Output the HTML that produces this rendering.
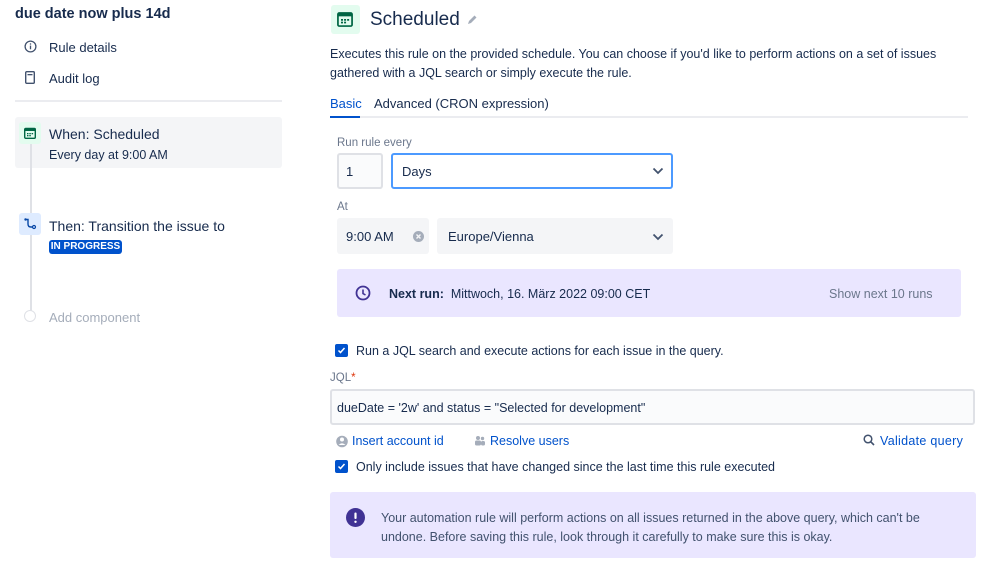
<!DOCTYPE html>
<html><head><meta charset="utf-8"><style>
*{margin:0;padding:0;box-sizing:border-box}
body{width:999px;height:569px;background:#fff;font-family:"Liberation Sans",sans-serif;color:#172b4d;position:relative;overflow:hidden;font-size:13px}
.a{position:absolute;white-space:nowrap}
.g{color:#6b778c}
.box{position:absolute;border-radius:3px}
.chk{position:absolute;width:13px;height:13px;background:#0052cc;border-radius:2px}
.lnk{color:#0052cc}
</style></head><body>
<div class="a" style="left:15px;top:6px;font-size:14.5px;font-weight:bold">due date now plus 14d</div>
<svg class="a" style="left:24px;top:40px" width="13" height="13" viewBox="0 0 14 14"><circle cx="7" cy="7" r="5.8" fill="none" stroke="#42526e" stroke-width="1.4"/><rect x="6.3" y="6" width="1.4" height="4" fill="#42526e"/><rect x="6.3" y="3.6" width="1.4" height="1.4" fill="#42526e"/></svg>
<div class="a" style="left:49px;top:40px;font-size:13px">Rule details</div>
<svg class="a" style="left:25px;top:71px" width="10" height="13" viewBox="0 0 10 13"><rect x="0.7" y="0.7" width="8.6" height="11.6" rx="1" fill="none" stroke="#42526e" stroke-width="1.4"/><rect x="2.5" y="3" width="5" height="1.3" fill="#42526e"/></svg>
<div class="a" style="left:49px;top:71px;font-size:13px">Audit log</div>
<div class="box" style="left:15px;top:100px;width:267px;height:2px;background:#ebecf0;border-radius:0"></div>
<div class="box" style="left:15px;top:117px;width:267px;height:51px;background:#f4f5f7"></div>
<div class="box" style="left:29.5px;top:144px;width:2px;height:168px;background:#dfe1e6;border-radius:0"></div>
<div class="box" style="left:19px;top:122px;width:22px;height:22px;background:#e3fcef"></div>
<svg class="a" style="left:24px;top:127px" width="12" height="12" viewBox="0 0 12 12"><rect x="0.7" y="1.5" width="10.6" height="9.8" rx="1" fill="none" stroke="#006644" stroke-width="1.4"/><rect x="0.7" y="1.5" width="10.6" height="2.5" fill="#006644"/><rect x="3" y="6" width="1.5" height="1.3" fill="#006644"/><rect x="5.3" y="6" width="1.5" height="1.3" fill="#006644"/><rect x="7.6" y="6" width="1.5" height="1.3" fill="#006644"/><rect x="3" y="8" width="1.5" height="1.3" fill="#006644"/><rect x="5.3" y="8" width="1.5" height="1.3" fill="#006644"/></svg>
<div class="a" style="left:49px;top:126px;font-size:14px">When: Scheduled</div>
<div class="a" style="left:49px;top:148px;font-size:12.5px">Every day at 9:00 AM</div>
<div class="box" style="left:19px;top:213px;width:22px;height:22px;background:#deebff"></div>
<svg class="a" style="left:23px;top:217px" width="14" height="14" viewBox="0 0 14 14"><path d="M2.5 2.5 L5 2.5 L5 7 Q5 10 8 10 L10 10" fill="none" stroke="#0747a6" stroke-width="1.4"/><circle cx="2.5" cy="2.5" r="1.2" fill="#0747a6"/><circle cx="11" cy="10" r="1.5" fill="none" stroke="#0747a6" stroke-width="1.2"/></svg>
<div class="a" style="left:49px;top:218px;font-size:14px">Then: Transition the issue to</div>
<div class="box" style="left:49px;top:240px;width:73px;height:14px;background:#0052cc;color:#fff;font-size:10px;font-weight:bold;line-height:14px;text-align:center">IN PROGRESS</div>
<div class="box" style="left:24px;top:310px;width:12px;height:12px;border:1.5px solid #dfe1e6;border-radius:50%;background:#fff"></div>
<div class="a" style="left:49px;top:310px;font-size:13px;color:#a5adba">Add component</div>

<div class="box" style="left:331px;top:5px;width:29px;height:29px;background:#e3fcef"></div>
<svg class="a" style="left:337px;top:11px" width="16" height="16" viewBox="0 0 12 12"><rect x="0.7" y="1.5" width="10.6" height="9.8" rx="1" fill="none" stroke="#006644" stroke-width="1.3"/><rect x="0.7" y="1.5" width="10.6" height="2.5" fill="#006644"/><rect x="3" y="6" width="1.5" height="1.3" fill="#006644"/><rect x="5.3" y="6" width="1.5" height="1.3" fill="#006644"/><rect x="7.6" y="6" width="1.5" height="1.3" fill="#006644"/><rect x="3" y="8" width="1.5" height="1.3" fill="#006644"/><rect x="5.3" y="8" width="1.5" height="1.3" fill="#006644"/></svg>
<div class="a" style="left:370px;top:9px;font-size:19px">Scheduled</div>
<svg class="a" style="left:466px;top:14px" width="12" height="12" viewBox="0 0 12 12"><path d="M2 10 L3 7 L8.5 1.5 L10.5 3.5 L5 9 Z" fill="#a5adba"/></svg>
<div class="a" style="left:330px;top:45px;font-size:12.5px;line-height:19px">Executes this rule on the provided schedule. You can choose if you'd like to perform actions on a set of issues<br>gathered with a JQL search or simply execute the rule.</div>
<div class="a" style="left:330px;top:96px;font-size:13px;color:#0052cc">Basic</div>
<div class="a" style="left:374px;top:96px;font-size:13px">Advanced (CRON expression)</div>
<div class="box" style="left:330px;top:116px;width:638px;height:2px;background:#ebecf0;border-radius:0"></div>
<div class="box" style="left:330px;top:116px;width:30px;height:2px;background:#0052cc;border-radius:0"></div>
<div class="a g" style="left:337px;top:137px;font-size:11.5px">Run rule every</div>
<div class="box" style="left:337px;top:153px;width:46px;height:36px;background:#fafbfc;border:2px solid #dfe1e6;padding:0 0 0 7px;line-height:34px">1</div>
<div class="box" style="left:391px;top:153px;width:282px;height:36px;background:#fff;border:2px solid #4c9aff;padding-left:9px;line-height:34px">Days</div>
<svg class="a" style="left:652px;top:167px" width="12" height="8" viewBox="0 0 12 8"><path d="M1.5 1.5 L6 6 L10.5 1.5" fill="none" stroke="#42526e" stroke-width="1.8"/></svg>
<div class="a g" style="left:337px;top:201px;font-size:11.5px">At</div>
<div class="box" style="left:337px;top:218px;width:92px;height:36px;background:#f4f5f7;padding-left:9px;line-height:37px">9:00 AM</div>
<svg class="a" style="left:413px;top:231px" width="11" height="11" viewBox="0 0 11 11"><circle cx="5.5" cy="5.5" r="5.5" fill="#a5adba"/><path d="M3.5 3.5 L7.5 7.5 M7.5 3.5 L3.5 7.5" stroke="#f4f5f7" stroke-width="1.4"/></svg>
<div class="box" style="left:437px;top:218px;width:236px;height:36px;background:#f4f5f7;padding-left:11px;line-height:37px">Europe/Vienna</div>
<svg class="a" style="left:652px;top:233px" width="12" height="8" viewBox="0 0 12 8"><path d="M1.5 1.5 L6 6 L10.5 1.5" fill="none" stroke="#42526e" stroke-width="1.8"/></svg>

<div class="box" style="left:337px;top:269px;width:624px;height:48px;background:#eae6ff"></div>
<svg class="a" style="left:355px;top:285px" width="16" height="16" viewBox="0 0 16 16"><circle cx="8" cy="8" r="6.5" fill="none" stroke="#403294" stroke-width="1.8"/><path d="M8 4.5 L8 8.5 L10.5 10" fill="none" stroke="#403294" stroke-width="1.6"/></svg>
<div class="a" style="left:389px;top:287px;font-size:12.5px"><b>Next run:</b>&nbsp; Mittwoch, 16. März 2022 09:00 CET</div>
<div class="a g" style="left:829px;top:287px;font-size:12.5px">Show next 10 runs</div>

<div class="chk" style="left:335px;top:344px"></div>
<svg class="a" style="left:337px;top:346px" width="9" height="9" viewBox="0 0 9 9"><path d="M1.5 4.5 L3.5 6.5 L7.5 2" fill="none" stroke="#fff" stroke-width="1.5"/></svg>
<div class="a" style="left:356px;top:344px;font-size:12.5px">Run a JQL search and execute actions for each issue in the query.</div>
<div class="a g" style="left:330px;top:372px;font-size:11.5px">JQL<span style="color:#de350b">*</span></div>
<div class="box" style="left:330px;top:389px;width:645px;height:36px;background:#fafbfc;border:2px solid #dfe1e6;padding-left:5px;line-height:34px;font-size:12.5px">dueDate = '2w' and status = "Selected for development"</div>
<svg class="a" style="left:336px;top:435px" width="12" height="13" viewBox="0 0 12 13"><circle cx="6" cy="6.5" r="5.8" fill="#a5adba"/><circle cx="6" cy="4.5" r="2" fill="#fff"/><path d="M2.5 10 Q6 6.5 9.5 10" fill="#fff"/></svg>
<div class="a lnk" style="left:352px;top:434px;font-size:12.5px">Insert account id</div>
<svg class="a" style="left:474px;top:435px" width="12" height="11" viewBox="0 0 12 11"><circle cx="4" cy="3" r="2" fill="#a5adba"/><circle cx="8.5" cy="3.5" r="1.7" fill="#a5adba"/><rect x="1" y="5.5" width="6" height="5" rx="1.5" fill="#a5adba"/><rect x="7" y="6" width="4" height="4.5" rx="1.5" fill="#a5adba"/></svg>
<div class="a lnk" style="left:490px;top:434px;font-size:12.5px">Resolve users</div>
<svg class="a" style="left:863px;top:434px" width="12" height="12" viewBox="0 0 12 12"><circle cx="5" cy="5" r="3.8" fill="none" stroke="#42526e" stroke-width="1.5"/><path d="M7.8 7.8 L11 11" stroke="#42526e" stroke-width="1.6"/></svg>
<div class="a lnk" style="left:880px;top:434px;font-size:12.5px;letter-spacing:0.3px">Validate query</div>
<div class="chk" style="left:335px;top:460px"></div>
<svg class="a" style="left:337px;top:462px" width="9" height="9" viewBox="0 0 9 9"><path d="M1.5 4.5 L3.5 6.5 L7.5 2" fill="none" stroke="#fff" stroke-width="1.5"/></svg>
<div class="a" style="left:356px;top:460px;font-size:12.5px">Only include issues that have changed since the last time this rule executed</div>

<div class="box" style="left:330px;top:492px;width:646px;height:66px;background:#eae6ff"></div>
<svg class="a" style="left:346px;top:508px" width="19" height="19" viewBox="0 0 19 19"><circle cx="9.5" cy="9.5" r="9.5" fill="#403294"/><rect x="8.4" y="4.5" width="2.2" height="6.5" rx="1" fill="#fff"/><circle cx="9.5" cy="13.8" r="1.2" fill="#fff"/></svg>
<div class="a" style="left:381px;top:509px;font-size:12.5px;line-height:18.5px;color:#42526e">Your automation rule will perform actions on all issues returned in the above query, which can't be<br>undone. Before saving this rule, look through it carefully to make sure this is okay.</div>
</body></html>
